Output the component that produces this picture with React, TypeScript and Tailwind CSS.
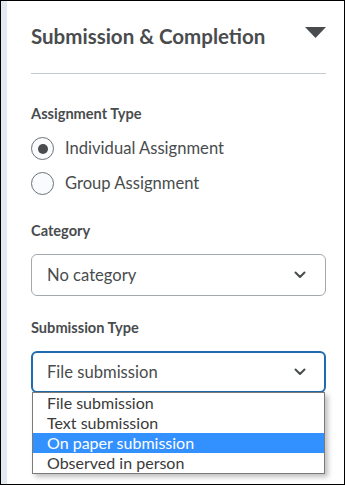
import React from "react";

function Chevron() {
  return (
    <svg width="12" height="8" viewBox="0 0 12 8" className="shrink-0">
      <path d="M1.5 1.5 L6 6 L10.5 1.5" fill="none" stroke="#494c4e" strokeWidth="2" strokeLinecap="round" strokeLinejoin="round" />
    </svg>
  );
}

function Radio({ checked, label }: { checked?: boolean; label: string }) {
  return (
    <div className="flex h-[35px] items-center">
      <div className="flex h-[23px] w-[23px] items-center justify-center rounded-full border border-[#6e7376] bg-[#f9fbff]">
        {checked && <div className="h-[10px] w-[10px] rounded-full bg-[#494c4e]" />}
      </div>
      <span className="ml-[11px] text-[16.6px] text-[#494c4e]">{label}</span>
    </div>
  );
}

export default function App() {
  const items = ["File submission", "Text submission", "On paper submission", "Observed in person"];
  return (
    <div
      className="flex h-[485px] w-[345px] overflow-hidden border border-black bg-white"
      style={{ fontFamily: "Lato, 'Noto Sans', sans-serif" }}
    >
      <div className="w-[6px] shrink-0 bg-[#e3e9f1]" />
      <div className="flex w-[295px] flex-col pl-[24px] pt-[22px]" style={{ boxSizing: "content-box" }}>
        <div className="flex h-[26px] items-start justify-between">
          <h2 className="text-[20.5px] font-bold leading-[26px] text-[#494c4e]">Submission &amp; Completion</h2>
          <svg width="21" height="11" viewBox="0 0 21 11" className="mt-[4px]">
            <path d="M0 0 H21 L10.5 11 Z" fill="#494c4e" />
          </svg>
        </div>
        <div className="mt-[24px] h-px bg-[#c4c9cd]" />
        <div className="mt-[30px] text-[14.6px] font-bold leading-[20px] text-[#494c4e]">Assignment Type</div>
        <div className="mt-[7px] flex flex-col">
          <Radio checked label="Individual Assignment" />
          <Radio label="Group Assignment" />
        </div>
        <div className="mt-[20px] text-[14.6px] font-bold leading-[20px] text-[#494c4e]">Category</div>
        <div className="mt-[13px] flex h-[42px] items-center justify-between rounded-[6px] border border-[#a3a9ad] pl-[15px] pr-[19px]">
          <span className="text-[16.6px] text-[#494c4e]">No category</span>
          <Chevron />
        </div>
        <div className="mt-[22px] text-[14.6px] font-bold leading-[20px] text-[#494c4e]">Submission Type</div>
        <div className="relative mt-[13px]">
          <div className="flex h-[42px] items-center justify-between rounded-[6px] border-2 border-[#1f6bad] pl-[14px] pr-[18px]">
            <span className="text-[16.6px] text-[#494c4e]">File submission</span>
            <Chevron />
          </div>
          <div className="absolute left-[1px] top-[41px] w-[293px] border border-[#7a7a7a] bg-white shadow-[3px_3px_5px_rgba(0,0,0,0.25)]">
            {items.map((it, i) => (
              <div
                key={it}
                className={
                  i === 2
                    ? "h-[20px] bg-[#3390ff] pl-[14px] text-[16px] leading-[20px] text-white"
                    : "h-[20px] pl-[14px] text-[16px] leading-[20px] text-[#3a3a3a]"
                }
              >
                {it}
              </div>
            ))}
          </div>
        </div>
      </div>
    </div>
  );
}
